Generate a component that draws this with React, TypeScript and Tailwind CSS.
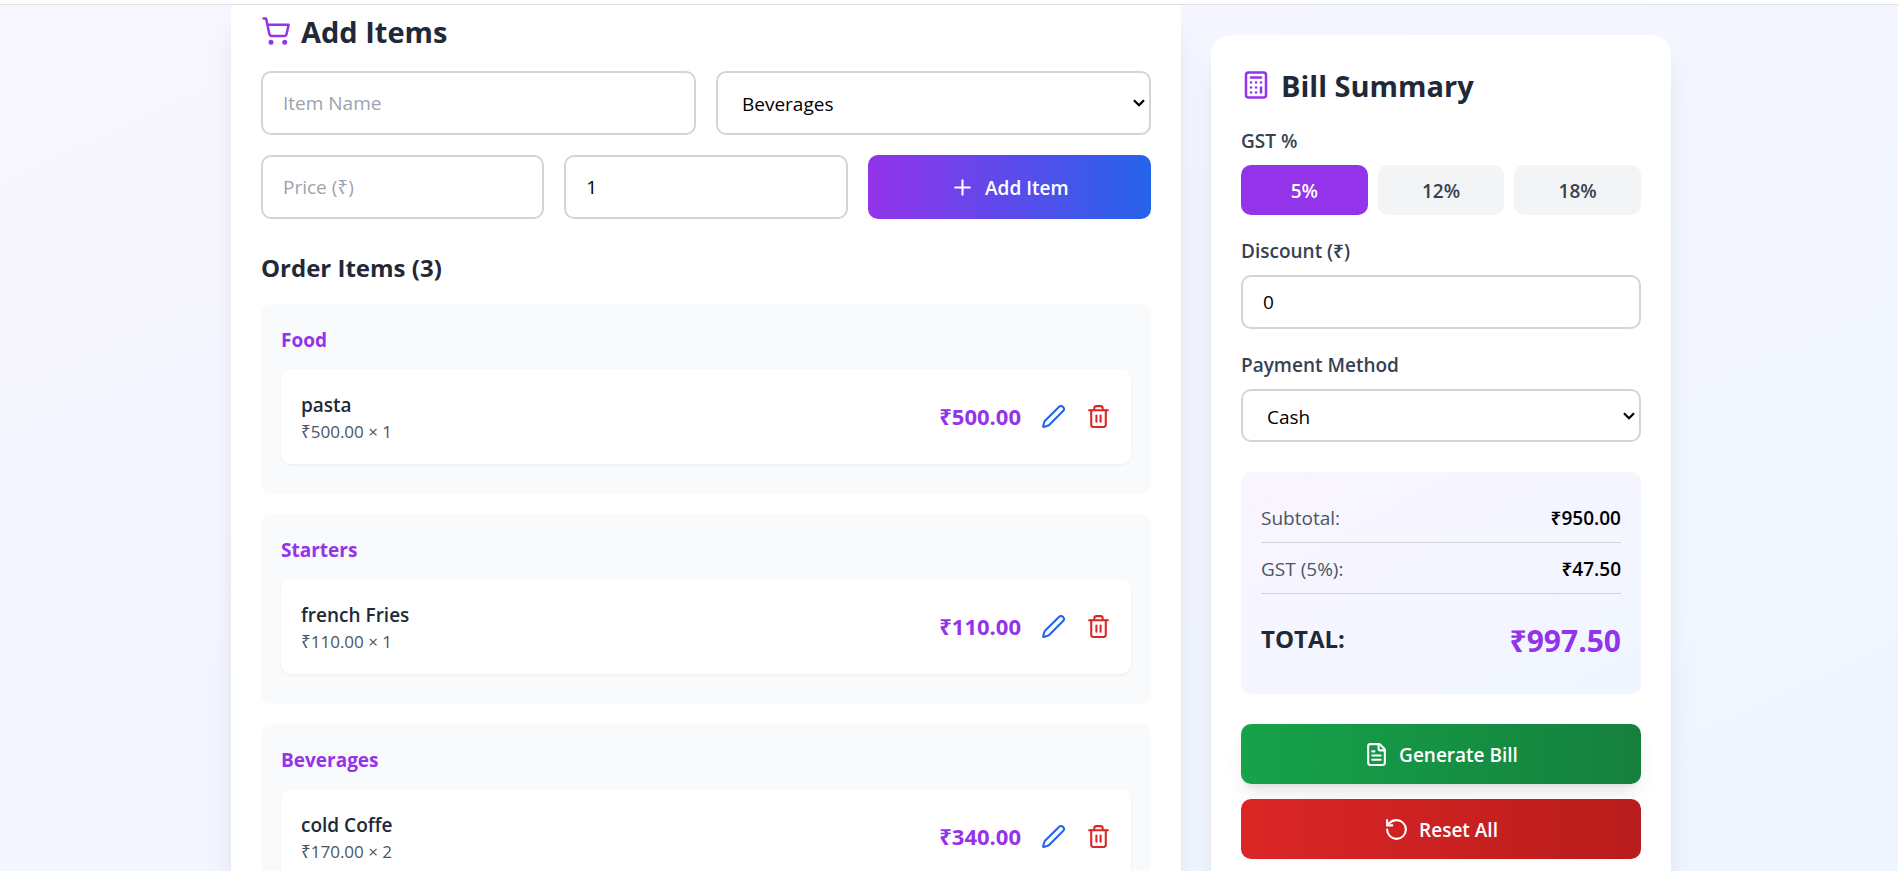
import React, { useState } from "react";
import { Calculator, FileText, Plus, RotateCcw, ShoppingCart, Trash2 } from "lucide-react";

type Item = { name: string; category: string; price: number; quantity: number };

const initialItems: Item[] = [
  { name: "pasta", category: "Food", price: 500, quantity: 1 },
  { name: "french Fries", category: "Starters", price: 110, quantity: 1 },
  { name: "cold Coffe", category: "Beverages", price: 170, quantity: 2 },
];

const money = (n: number) => "₹" + n.toFixed(2);

const field = "block w-full rounded-[10px] border-2 border-[#d1d5db] bg-white px-5 text-[19px] leading-[30px] text-black placeholder:text-[#9ca3af]";
const card = "bg-white px-[30px] shadow-[0_25px_31px_-6px_rgba(0,0,0,0.1),0_10px_12px_-7px_rgba(0,0,0,0.1)]";
const title = "mb-5 flex items-center gap-2.5 text-[29px] leading-[38px] font-bold text-[#1f2937]";
const fieldLabel = "mb-2.5 block pt-0.5 text-[19px] leading-7 font-semibold text-[#374151]";

function PencilIcon() {
  return (
    <svg width="25" height="25" viewBox="0 0 24 24" fill="none" stroke="currentColor" strokeWidth="2" strokeLinecap="round" strokeLinejoin="round" aria-hidden="true">
      <path d="M21.174 6.812a1 1 0 0 0-3.986-3.987L3.842 16.174a2 2 0 0 0-.5.83l-1.321 4.352a.5.5 0 0 0 .623.622l4.353-1.32a2 2 0 0 0 .83-.497z" />
    </svg>
  );
}

type SelectProps = { id: string; label?: string; options: string[]; height: string };

function Select({ id, label, options, height }: SelectProps) {
  return (
    <div className="relative">
      <select id={id} aria-label={label} defaultValue={options[0]} className={field + " appearance-none pt-0.5 pl-6 " + height}>
        {options.map((option) => (
          <option key={option}>{option}</option>
        ))}
      </select>
      <svg
        className="pointer-events-none absolute inset-y-0 right-[6px] my-auto"
        width="12"
        height="8"
        viewBox="0 0 12 8"
        fill="none"
        stroke="black"
        strokeWidth="2.3"
        aria-hidden="true"
      >
        <path d="M1 1.2 6 6.2 11 1.2" />
      </svg>
    </div>
  );
}

function ItemGroup({ item }: { item: Item }) {
  return (
    <section className="rounded-[10px] bg-[#f9fafb] p-5">
      <h4 className="mb-[15px] pt-0.5 text-[19px] leading-7 font-bold text-[#9333ea]">{item.category}</h4>
      <div className="mb-2.5 flex items-center justify-between rounded-[10px] bg-white p-5 shadow-[0_1px_3px_0_rgba(0,0,0,0.06)]">
        <div className="pt-0.5">
          <p className="text-[19px] leading-7 font-semibold text-[#1f2937]">{item.name}</p>
          <p className="text-[17px] leading-[25px] text-[#4b5563]">
            {money(item.price)} × {item.quantity}
          </p>
        </div>
        <div className="flex items-center gap-5">
          <span className="text-[22px] leading-[35px] font-bold text-[#9333ea]">{money(item.price * item.quantity)}</span>
          <button type="button" aria-label={"Edit " + item.name} className="text-[#2563eb]">
            <PencilIcon />
          </button>
          <button type="button" aria-label={"Delete " + item.name} className="text-[#dc2626]">
            <Trash2 size={25} />
          </button>
        </div>
      </div>
    </section>
  );
}

export default function App() {
  const [items] = useState(initialItems);
  const [gst, setGst] = useState(5);
  const [discount, setDiscount] = useState(0);
  const subtotal = items.reduce((sum, i) => sum + i.price * i.quantity, 0);
  const tax = (subtotal * gst) / 100;

  return (
    <div className="flex h-screen flex-col overflow-hidden bg-white font-['Segoe_UI','Open_Sans','Noto_Sans',sans-serif] text-black">
      <header className="h-[5px] shrink-0 border-b border-[#e0e0e0] bg-white" />
      <div className="min-h-0 grow overflow-hidden bg-linear-to-br from-[#f8f6ff] to-[#eff6ff] pl-1">
        <main className="mx-auto grid max-w-[1440px] grid-cols-3 items-start gap-[30px]">
          <section className={card + " col-span-2 rounded-b-[20px] pt-[6px] pb-[30px]"}>
            <h2 className={title}>
              <ShoppingCart size={30} className="text-[#9333ea]" />
              <span className="pt-0.5">Add Items</span>
            </h2>
            <form onSubmit={(e) => e.preventDefault()}>
              <div className="mb-5 grid grid-cols-2 gap-5">
                <input aria-label="Item name" placeholder="Item Name" className={field + " h-16"} />
                <Select id="category" label="Category" options={["Beverages", "Food", "Starters"]} height="h-16" />
              </div>
              <div className="mb-[30px] grid grid-cols-3 gap-5">
                <input aria-label="Price" placeholder="Price (₹)" className={field + " h-16"} />
                <input aria-label="Quantity" defaultValue="1" className={field + " h-16"} />
                <button
                  type="submit"
                  className="flex h-16 items-center justify-center gap-2.5 rounded-[10px] bg-linear-to-r/srgb from-[#9333ea] to-[#2563eb] text-[19px] leading-7 font-semibold text-white"
                >
                  <Plus size={25} />
                  <span className="pt-0.5">Add Item</span>
                </button>
              </div>
            </form>
            <h3 className="mb-5 pt-0.5 text-2xl leading-[33px] font-bold text-[#1f2937]">Order Items ({items.length})</h3>
            <div className="flex flex-col gap-5">
              {items.map((item) => (
                <ItemGroup key={item.name} item={item} />
              ))}
            </div>
          </section>

          <aside className={card + " mt-[30px] rounded-[20px] py-[30px]"}>
            <h2 className={title}>
              <Calculator size={30} className="text-[#9333ea]" />
              <span className="pt-0.5">Bill Summary</span>
            </h2>
            <div className="mb-5" role="group" aria-labelledby="gst">
              <p id="gst" className={fieldLabel}>GST %</p>
              <div className="grid grid-cols-3 gap-2.5">
                {[5, 12, 18].map((rate) => (
                  <button
                    key={rate}
                    type="button"
                    onClick={() => setGst(rate)}
                    className={
                      "rounded-[10px] pt-3 pb-2.5 text-[19px] leading-7 font-semibold " +
                      (gst === rate ? "bg-[#9333ea] text-white" : "bg-[#f3f4f6] text-[#374151]")
                    }
                  >
                    {rate}%
                  </button>
                ))}
              </div>
            </div>
            <div className="mb-5">
              <label htmlFor="discount" className={fieldLabel}>Discount (₹)</label>
              <input
                id="discount"
                value={discount}
                onChange={(e) => setDiscount(Number(e.target.value) || 0)}
                className={field + " h-[54px]"}
              />
            </div>
            <div className="mb-[30px]">
              <label htmlFor="payment" className={fieldLabel}>Payment Method</label>
              <Select id="payment" options={["Cash", "Card", "UPI"]} height="h-[53px]" />
            </div>
            <div className="mb-[30px] rounded-[10px] bg-linear-to-br from-[#faf5ff] to-[#eff6ff] p-5 text-[19px] leading-7">
              <div className="flex justify-between border-b border-[#d1d5db] pt-3 pb-2.5">
                <span className="text-[#4b5563]">Subtotal:</span>
                <span className="font-semibold">{money(subtotal)}</span>
              </div>
              <div className="flex justify-between border-b border-[#d1d5db] pt-3 pb-2.5">
                <span className="text-[#4b5563]">GST ({gst}%):</span>
                <span className="font-semibold">{money(tax)}</span>
              </div>
              <div className="mt-3 flex items-start justify-between pt-[15px] pb-[13px] font-bold">
                <span className="text-2xl leading-[35px] text-[#1f2937]">TOTAL:</span>
                <span className="text-[30px] leading-10 text-[#9333ea]">{money(subtotal + tax - discount)}</span>
              </div>
            </div>
            <div className="flex flex-col gap-[15px] text-[19px] leading-7 font-semibold text-white">
              <button
                type="button"
                className="flex h-[60px] items-center justify-center gap-2.5 rounded-[10px] bg-linear-to-r/srgb from-[#16a34a] to-[#15803d] shadow-[0_12px_19px_-4px_rgba(0,0,0,0.1),0_5px_7px_-5px_rgba(0,0,0,0.1)]"
              >
                <FileText size={25} />
                <span className="pt-0.5">Generate Bill</span>
              </button>
              <button
                type="button"
                className="flex h-[60px] items-center justify-center gap-2.5 rounded-[10px] bg-linear-to-r/srgb from-[#dc2626] to-[#b91c1c]"
              >
                <RotateCcw size={25} />
                <span className="pt-0.5">Reset All</span>
              </button>
            </div>
          </aside>
        </main>
      </div>
    </div>
  );
}
